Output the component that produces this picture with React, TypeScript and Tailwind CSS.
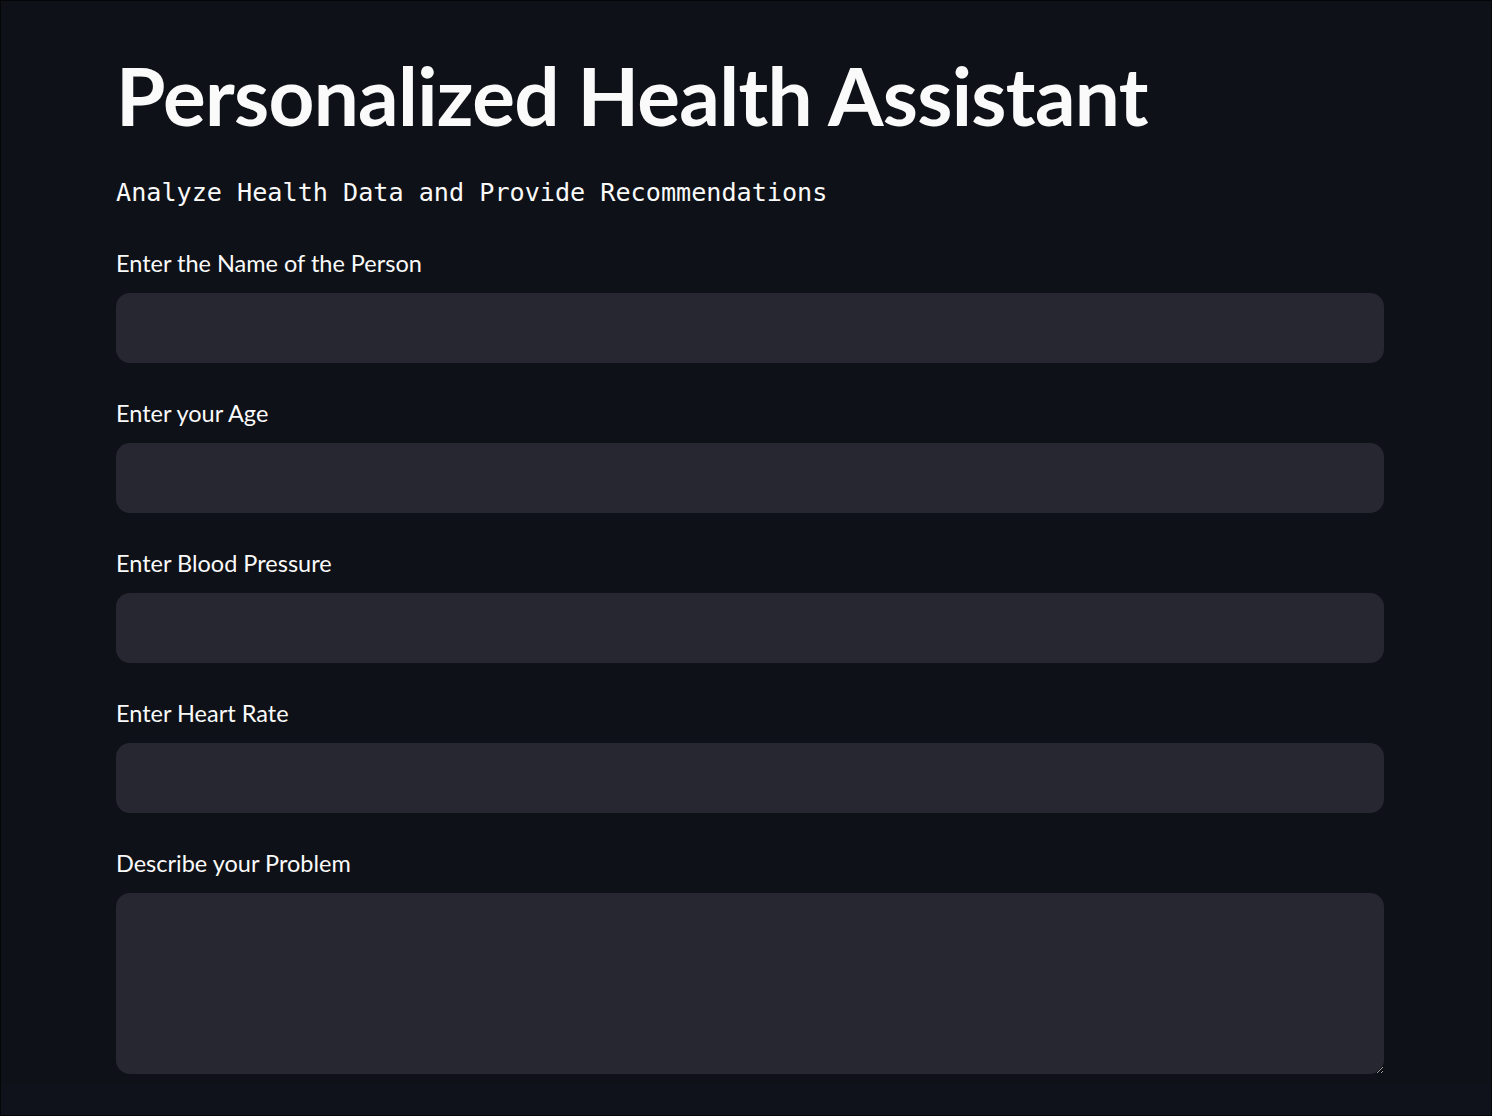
import React from "react";

const FIELDS = [
  "Enter the Name of the Person",
  "Enter your Age",
  "Enter Blood Pressure",
  "Enter Heart Rate",
];

export default function App() {
  return (
    <div className="min-h-[1116px] w-full bg-[#0e1117] text-[#fafafa] font-['Lato','Noto_Sans',sans-serif] border border-[#050608] flex flex-col">
      <main className="flex-1 pl-[115px] pr-[107px] pt-[46px]">
        <h1 className="text-[80px] leading-[96px] font-bold tracking-[-0.7px]">
          Personalized Health Assistant
        </h1>
        <p className="mt-[34px] font-['DejaVu_Sans_Mono','Liberation_Mono',monospace] text-[25.15px] leading-[32px]">
          Analyze Health Data and Provide Recommendations
        </p>

        <div className="mt-[39px] flex flex-col gap-[35px]">
          {FIELDS.map((label) => (
            <label key={label} className="flex flex-col">
              <span className="text-[23.5px] leading-[30px] mb-[15px]">{label}</span>
              <input
                type="text"
                className="h-[70px] w-full rounded-[14px] bg-[#262730] px-5 text-[24px] outline-none"
              />
            </label>
          ))}
          <label className="flex flex-col">
            <span className="text-[23.5px] leading-[30px] mb-[15px]">Describe your Problem</span>
            <textarea className="h-[181px] w-full rounded-[14px] bg-[#262730] px-5 py-4 text-[24px] outline-none resize-y" />
          </label>
        </div>
      </main>
      <div className="h-[30px] bg-[#0f121a]" />
    </div>
  );
}
